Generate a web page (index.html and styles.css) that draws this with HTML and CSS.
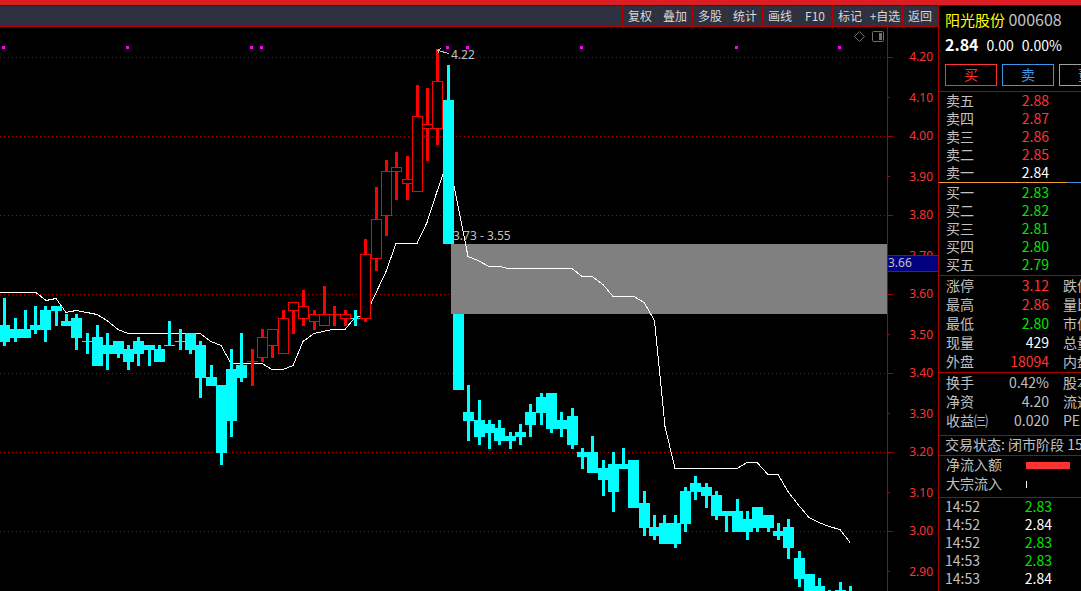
FILE: index.html
```html
<!DOCTYPE html>
<html lang="zh-CN">
<head>
<meta charset="utf-8">
<meta name="viewport" content="width=device-width, initial-scale=1">
<title>阳光股份 000608</title>
<link rel="stylesheet" href="styles.css">
</head>
<body>
<div class="strip"></div>
<div class="app">
  <main class="main">
    <nav class="toolbar">
      <button type="button">复权</button>
      <button type="button">叠加</button>
      <button type="button">多股</button>
      <button type="button">统计</button>
      <button type="button">画线</button>
      <button type="button">F10</button>
      <button type="button">标记</button>
      <button type="button">+自选</button>
      <button type="button">返回</button>
    </nav>
    <svg class="chart" viewBox="0 27 938 564" role="img" aria-label="K线图">
      <path class="grid" d="M0 57.5H887M0 136.5H887M0 215.5H887M0 294.5H887M0 373.5H887M0 452.5H887M0 531.5H887"/>
      <rect class="gap" x="451" y="244" width="436" height="70"/>
      <polyline class="average" points="0,292.5 36,292.5 46,300.5 56,298.5 66,312.5 76,310.5 87,312.5 97,314.5 107,320.5 118,329.5 128,333.5 200,333.5 211,341.5 221,345.5 231,363.5 262,363.5 272,369.5 283,369.5 293,365.5 303,341.5 314,333.5 332,329.5 345,329.5 355,317.5 360,316.5 371,303.5 386,271.5 396,243.5 417,243.5 427,222.5 437,191.5 443,174.5 448,168.5 454,185.5 468,256.5 478,260.5 489,266.5 500,266.5 508,268.5 572,268.5 582,276.5 592,276.5 603,284.5 613,296.5 634,296.5 644,302.5 654,319.5 655,325.5 665,426.5 675,468.5 737,468.5 747,462.5 757,462.5 768,474.5 778,474.5 788,491.5 798,504.5 809,517.5 819,522.5 829,526.5 840,529.5 850,542.5"/>

      <!-- falling days: wicks, then bodies -->
      <path class="wick down" d="M4.5 298V346M15.5 318V342M25.5 310V338M35.5 306V334M45.5 306V342M56.5 306V326M66.5 314V326M76.5 314V350M87.5 333V354M97.5 325V366M107.5 333V370M118.5 341V358M128.5 345V370M138.5 337V366M149.5 345V366M159.5 345V362M169.5 321V346M180.5 329V350M190.5 333V354M200.5 341V398M211.5 365V386M221.5 385V465M231.5 349V437M241.5 333V382M355.5 310V326M448.5 65V244M468.5 385V441M479.5 400V445M489.5 420V449M499.5 420V445M510.5 432V449M520.5 424V445M530.5 404V437M541.5 393V425M551.5 393V433M561.5 412V437M572.5 408V449M582.5 448V469M592.5 436V473M603.5 460V496M613.5 452V512M623.5 448V469M644.5 491V536M654.5 515V540M664.5 515V544M675.5 515V548M685.5 487V532M695.5 476V500M706.5 483V508M716.5 491V520M726.5 511V532M737.5 499V532M747.5 511V540M757.5 507V532M768.5 515V532M778.5 523V540M788.5 519V559M799.5 551V587M819.5 578V591M829.5 590V591M840.5 582V591M850.5 586V591"/>
      <path class="body down" d="M4.5 325V342M15.5 329V338M25.5 329V338M35.5 325V330M45.5 310V330M56.5 306V311M66.5 321V326M76.5 318V338M87.5 341V342M97.5 337V366M107.5 345V354M118.5 341V354M128.5 349V362M138.5 341V354M149.5 345V350M159.5 349V362M169.5 345V346M180.5 341V342M190.5 333V350M200.5 345V378M211.5 377V386M221.5 385V453M231.5 369V421M241.5 365V378M355.5 318V319M448.5 100V244M458.5 314V390M468.5 412V421M479.5 420V437M489.5 424V433M499.5 428V441M510.5 436V441M520.5 432V437M530.5 412V425M541.5 397V413M551.5 393V429M561.5 420V429M572.5 416V445M582.5 452V457M592.5 452V473M603.5 468V480M613.5 464V492M623.5 464V469M633.5 460V508M644.5 503V528M654.5 527V536M664.5 523V544M675.5 523V544M685.5 491V524M695.5 483V492M706.5 487V496M716.5 495V516M726.5 511V516M737.5 511V532M747.5 519V532M757.5 507V528M768.5 515V528M778.5 531V536M788.5 527V548M799.5 558V579M809.5 574V591M819.5 586V591M840.5 590V591"/>

      <!-- rising days: wicks, then hollow bodies -->
      <path class="wick up" d="M252.5 349V386M262.5 329V362M272.5 329V358M283.5 310V354M293.5 302V334M303.5 290V326M314.5 310V330M324.5 286V326M334.5 306V326M345.5 310V326M365.5 239V322M376.5 187V271M386.5 160V236M396.5 152V200M407.5 156V200M417.5 85V192M427.5 88V161M437.5 49V145"/>
      <path class="hollow" d="M247 361.5H258M257.5 337.5h10v20h-10zM267.5 329.5h10v16h-10zM278.5 318.5h10v35h-10zM288.5 302.5h10v8h-10zM298.5 306.5h10v12h-10zM309.5 314.5h10v7h-10zM319.5 314.5h10v11h-10zM329 314.5H341M340.5 314.5h10v4h-10zM360.5 254.5h10v64h-10zM371.5 219.5h10v39h-10zM381.5 171.5h10v44h-10zM391.5 167.5h10v4h-10zM402.5 179.5h10v4h-10zM412.5 116.5h10v75h-10zM422.5 124.5h10v4h-10zM432.5 81.5h10v47h-10z"/>

      <path class="signal" d="M2 46h3v3h-3zM126 46h3v3h-3zM250 46h3v3h-3zM260 46h3v3h-3zM446 46h3v3h-3zM466 46h3v3h-3zM580 46h3v3h-3zM735 46h3v3h-3zM838 46h3v3h-3z"/>
      <path class="arrow" d="M449 53.5L438 50.5M441 48.5L437.5 50.5L439.5 53.5"/>
      <text class="note" x="451" y="59">4.22</text>
      <text class="note" x="453" y="240">3.73 - 3.55</text>
      <path class="tool" d="M859.5 31.5L864.5 36.5L859.5 41.5L854.5 36.5Z"/>
      <rect class="tool" x="872.5" y="31.5" width="11" height="10" rx="1"/>
      <rect class="tool-fill" x="879" y="33" width="3" height="7"/>

      <path class="axis" d="M887.5 27V591M888 57.5H893M888 136.5H893M888 215.5H893M888 294.5H893M888 373.5H893M888 452.5H893M888 531.5H893M888 97.5H890M888 176.5H890M888 255.5H890M888 334.5H890M888 413.5H890M888 492.5H890M888 571.5H890"/>
      <g class="scale">
        <text x="933" y="61">4.20</text>
        <text x="933" y="102">4.10</text>
        <text x="933" y="140">4.00</text>
        <text x="933" y="181">3.90</text>
        <text x="933" y="219">3.80</text>
        <text x="933" y="260">3.70</text>
        <text x="933" y="298">3.60</text>
        <text x="933" y="339">3.50</text>
        <text x="933" y="377">3.40</text>
        <text x="933" y="418">3.30</text>
        <text x="933" y="456">3.20</text>
        <text x="933" y="497">3.10</text>
        <text x="933" y="535">3.00</text>
        <text x="933" y="576">2.90</text>
      </g>
      <rect class="cursor" x="888" y="255" width="50" height="17"/>
      <path class="axis" d="M887 255.5H938M887 271.5H938"/>
      <text class="note" x="888" y="267">3.66</text>
    </svg>
  </main>

  <aside class="quote">
    <header class="head">
      <h1 class="name">阳光股份 <span class="code">000608</span></h1>
      <p class="price"><strong>2.84</strong><span>0.00</span><span>0.00%</span></p>
      <div class="trade">
        <button type="button" class="buy">买</button>
        <button type="button" class="sell">卖</button>
        <button type="button" class="more">董</button>
      </div>
    </header>
    <section class="block asks">
      <table>
        <tr><th scope="row">卖五</th><td class="red">2.88</td><td></td></tr>
        <tr><th scope="row">卖四</th><td class="red">2.87</td><td></td></tr>
        <tr><th scope="row">卖三</th><td class="red">2.86</td><td></td></tr>
        <tr><th scope="row">卖二</th><td class="red">2.85</td><td></td></tr>
        <tr><th scope="row">卖一</th><td class="white">2.84</td><td></td></tr>
      </table>
    </section>
    <div class="ratio"></div>
    <section class="bids">
      <table>
        <tr><th scope="row">买一</th><td class="green">2.83</td><td></td></tr>
        <tr><th scope="row">买二</th><td class="green">2.82</td><td></td></tr>
        <tr><th scope="row">买三</th><td class="green">2.81</td><td></td></tr>
        <tr><th scope="row">买四</th><td class="green">2.80</td><td></td></tr>
        <tr><th scope="row">买五</th><td class="green">2.79</td><td></td></tr>
      </table>
    </section>
    <section class="block day">
      <table class="tall">
        <tr><th scope="row">涨停</th><td class="red">3.12</td><td>跌停</td></tr>
        <tr><th scope="row">最高</th><td class="red">2.86</td><td>量比</td></tr>
        <tr><th scope="row">最低</th><td class="green">2.80</td><td>市值</td></tr>
        <tr><th scope="row">现量</th><td class="white">429</td><td>总量</td></tr>
        <tr><th scope="row">外盘</th><td class="red">18094</td><td>内盘</td></tr>
      </table>
    </section>
    <section class="block basics">
      <table class="tall">
        <tr><th scope="row">换手</th><td>0.42%</td><td>股本</td></tr>
        <tr><th scope="row">净资</th><td>4.20</td><td>流通</td></tr>
        <tr><th scope="row">收益㈢</th><td>0.020</td><td>PE</td></tr>
      </table>
    </section>
    <p class="block status">交易状态: 闭市阶段 15:00</p>
    <section class="block flow">
      <div class="flow-row"><span>净流入额</span><i class="bar"></i></div>
      <div class="flow-row"><span>大宗流入</span><i class="mark"></i></div>
    </section>
    <section class="block">
      <table class="ticks">
        <tr><th scope="row">14:52</th><td class="green">2.83</td><td></td></tr>
        <tr><th scope="row">14:52</th><td class="white">2.84</td><td></td></tr>
        <tr><th scope="row">14:52</th><td class="green">2.83</td><td></td></tr>
        <tr><th scope="row">14:53</th><td class="green">2.83</td><td></td></tr>
        <tr><th scope="row">14:53</th><td class="white">2.84</td><td></td></tr>
      </table>
    </section>
  </aside>
</div>
</body>
</html>
```
FILE: styles.css
```css
* {
  box-sizing: border-box;
}

body {
  margin: 0;
  background: #000;
  color: #c0c0c0;
  font: 14px/18px "Noto Sans CJK SC", "Noto Sans", sans-serif;
  overflow-x: hidden;
}

button {
  font-family: inherit;
  padding: 0;
  cursor: pointer;
}

.strip {
  height: 6px;
  background: #dc1e24;
  border-bottom: 1px solid #301014;
}

.app {
  display: flex;
  align-items: stretch;
}

.main {
  flex: 1;
  min-width: 0;
}

.toolbar {
  display: flex;
  justify-content: flex-end;
  height: 21px;
  padding-right: 1px;
  background: #2f3040;
  border-bottom: 1px solid #b00000;
}

.toolbar button {
  width: 35px;
  border: 0;
  border-left: 1px solid #b00000;
  background: none;
  color: #d8d8d8;
  font-size: 12px;
  line-height: 20px;
  white-space: nowrap;
}

/* chart */
.chart {
  display: block;
  width: 100%;
  height: auto;
  shape-rendering: crispEdges;
  font: 12px "Noto Sans", sans-serif;
}

.grid {
  stroke: #b00000;
  stroke-dasharray: 1 3;
}

.axis {
  fill: none;
  stroke: #b00000;
}

.gap {
  fill: #808080;
}

.average {
  fill: none;
  stroke: #fff;
}

.wick {
  stroke-width: 3;
}

.body {
  stroke-width: 11;
}

.down {
  stroke: #0ff;
}

.up {
  stroke: #f00;
}

.hollow {
  fill: #000;
  stroke: #f00;
}

.signal {
  fill: #f0f;
}

.arrow {
  fill: none;
  stroke: #c0c0c0;
}

.note {
  fill: #c0c0c0;
}

.tool {
  fill: none;
  stroke: #707070;
  shape-rendering: auto;
}

.tool-fill {
  fill: #707070;
}

.scale {
  fill: #ff3232;
  text-anchor: end;
}

.cursor {
  fill: #000080;
}

/* quote panel */
.quote {
  flex: 0 0 143px;
  overflow: hidden;
  white-space: nowrap;
  border-left: 1px solid #b00000;
}

.head {
  height: 85px;
  padding: 2px 0 0 6px;
}

.name {
  margin: 0;
  color: #ff0;
  font-size: 15px;
  font-weight: 400;
  line-height: 22px;
}

.code {
  color: #c0c0c0;
  font-size: 16px;
}

.price {
  display: flex;
  align-items: baseline;
  gap: 8px;
  margin: 0;
  color: #fff;
  line-height: 26px;
}

.price strong {
  font-size: 16px;
}

.trade {
  display: flex;
  gap: 5px;
  margin-top: 6px;
}

.trade button {
  flex: 0 0 52px;
  height: 22px;
  padding-bottom: 2px;
  border: 1px solid;
  background: none;
  font-size: 14px;
  line-height: 18px;
}

.trade .buy {
  color: #ff3232;
}

.trade .sell {
  color: #3c96e6;
}

.trade .more {
  color: #a0a0a0;
}

.block {
  border-top: 1px solid #b00000;
}

.ratio {
  height: 1px;
  background: linear-gradient(to right, #f0a030 90%, #3c8ce0 90%);
}

.bids {
  padding: 1px 0;
}

.day {
  padding-top: 1px;
}

.basics {
  padding: 1px 0 4px;
}

.status {
  margin: 0;
  padding: 0 0 2px 6px;
  line-height: 17px;
}

table {
  width: 100%;
  table-layout: fixed;
  border-collapse: collapse;
}

th,
td {
  height: 18px;
  padding: 0 0 2px;
  line-height: 16px;
  text-align: left;
  font-weight: 400;
}

.tall th,
.tall td {
  height: 19px;
  line-height: 17px;
}

th {
  width: 51px;
  padding-left: 7px;
}

th + td {
  width: 59px;
  text-align: right;
}

td + td {
  padding-left: 14px;
}

.ticks th {
  padding-left: 6px;
}

.ticks th + td {
  width: 62px;
}

.flow {
  padding-bottom: 3px;
}

.flow-row {
  display: flex;
  align-items: center;
  height: 19px;
  padding-left: 7px;
}

.flow-row span {
  width: 80px;
  padding-bottom: 2px;
  line-height: 17px;
}

.bar {
  width: 44px;
  height: 7px;
  background: #ff3232;
}

.mark {
  width: 1px;
  height: 7px;
  background: #fff;
}

.red {
  color: #ff3232;
}

.green {
  color: #00e600;
}

.white {
  color: #fff;
}
```
